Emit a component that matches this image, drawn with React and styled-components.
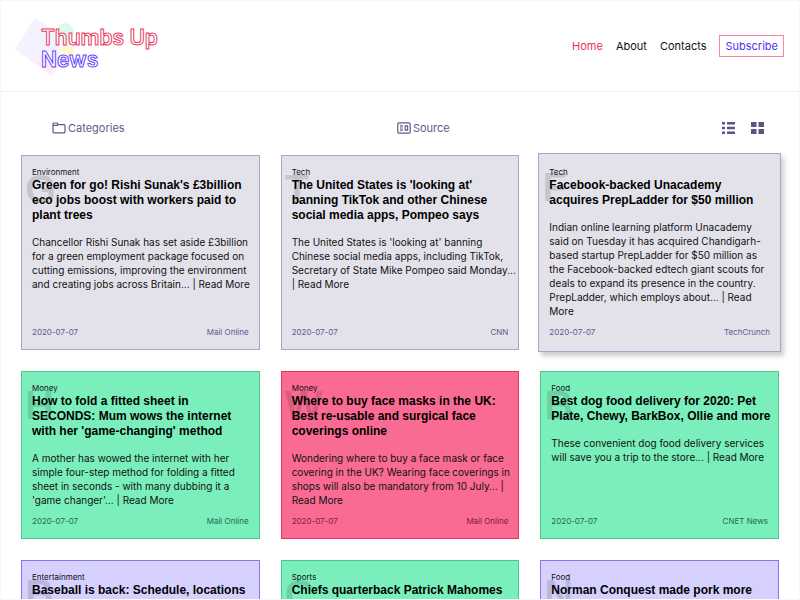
import React from "react";
import styled, { createGlobalStyle } from "styled-components";

const Global = createGlobalStyle`
  * { box-sizing: border-box; }
  body { margin: 0; background: #fff; color: #111; font-family: Inter, "Open Sans", sans-serif; overflow: hidden; }
`;

const Page = styled.div`
  height: 100vh;
  overflow: hidden;
  border: 1px solid #f8f8f8;
`;

const Header = styled.header`
  display: flex;
  justify-content: space-between;
  align-items: center;
  height: 91px;
  padding: 0 15px 0 14px;
  border-bottom: 1px solid #f3f3f3;
`;

const Brand = styled.a`
  display: grid;
  text-decoration: none;
  & > * { grid-area: 1 / 1; }
`;

const Shapes = styled.svg`
  width: 64px;
  height: 62px;
`;

const BrandName = styled.span`
  padding: 12px 0 0 26px;
  font: 600 21px/22px Inter, sans-serif;
  color: #fff;
  -webkit-text-stroke: 1px #e8405f;
`;

const BrandSecond = styled.span`
  display: block;
  -webkit-text-stroke-color: #6647ff;
`;

const Nav = styled.nav`
  display: flex;
  align-items: center;
  gap: 13px;
`;

const NavLink = styled.a`
  font-size: 11px;
  line-height: 20px;
  color: ${(p) => (p.$active ? "#e8304f" : "#111")};
  text-decoration: none;
`;

const Subscribe = styled.button`
  height: 22px;
  padding: 0 5px;
  border: 1px solid #fb86a4;
  background: #fff;
  color: #5030f0;
  font: 11px/20px Inter, sans-serif;
`;

const Toolbar = styled.div`
  display: flex;
  justify-content: space-between;
  align-items: center;
  padding: 26px 35px 17px 51px;
`;

const Filter = styled.button`
  display: flex;
  align-items: center;
  gap: 2px;
  padding: 0;
  border: 0;
  background: none;
  color: #5f5a8c;
  font: 11px/20px Inter, sans-serif;
`;

const Views = styled.div`
  display: flex;
  gap: 16px;
`;

const ViewButton = styled.button`
  display: flex;
  padding: 0;
  border: 0;
  background: none;
  color: #5a548c;
`;

const Grid = styled.main`
  display: grid;
  grid-template-columns: repeat(3, minmax(0, 1fr));
  gap: 21px;
  padding: 0 20px;
`;

const tones = {
  grey: ["#e3e2eb", "#a9a3cd", "#5f5a8c"],
  green: ["#7aefbb", "#48c98f", "#27694c"],
  pink: ["#f96b92", "#e8305f", "#7d1c38"],
  violet: ["#d5d0fd", "#8674ee", "#5f5a8c"],
};

const Card = styled.article`
  position: relative;
  display: flex;
  flex-direction: column;
  padding: ${(p) => (p.$raised ? "13px 10px 14px" : "11px 10px 12px")};
  margin: ${(p) => (p.$raised ? "-2px" : "0")};
  background: ${(p) => tones[p.$tone][0]};
  border: 1px solid ${(p) => tones[p.$tone][1]};
  box-shadow: ${(p) => (p.$raised ? "3px 4px 5px rgba(0, 0, 0, 0.2)" : "none")};
`;

const Initial = styled.span`
  position: absolute;
  top: 13px;
  left: 3px;
  font: 700 40px/40px "Liberation Sans", sans-serif;
  color: rgba(0, 0, 0, 0.12);
`;

const Category = styled.span`
  position: relative;
  font-size: 8px;
  line-height: 10px;
`;

const Title = styled.h2`
  position: relative;
  margin: 1px -4px 12px 0;
  font: 700 12px/15px "Liberation Sans", Arial, sans-serif;
  color: #000;
`;

const Summary = styled.p`
  position: relative;
  margin: 0 ${(p) => (p.$raised ? "0" : "-9px")} 9px 0;
  font-size: 10px;
  line-height: 14px;
`;

const ReadMore = styled.a`
  color: inherit;
  text-decoration: none;
`;

const Meta = styled.footer`
  display: flex;
  justify-content: space-between;
  margin-top: auto;
  font-size: 8px;
  line-height: 10px;
  color: ${(p) => tones[p.$tone][2]};
`;

const articles = [
  { tone: "grey", category: "Environment", source: "Mail Online", title: "Green for go! Rishi Sunak's £3billion eco jobs boost with workers paid to plant trees", text: "Chancellor Rishi Sunak has set aside £3billion for a green employment package focused on cutting emissions, improving the environment and creating jobs across Britain..." },
  { tone: "grey", category: "Tech", source: "CNN", title: "The United States is 'looking at' banning TikTok and other Chinese social media apps, Pompeo says", text: "The United States is 'looking at' banning Chinese social media apps, including TikTok, Secretary of State Mike Pompeo said Monday..." },
  { tone: "grey", raised: true, category: "Tech", source: "TechCrunch", title: "Facebook-backed Unacademy acquires PrepLadder for $50 million", text: "Indian online learning platform Unacademy said on Tuesday it has acquired Chandigarh-based startup PrepLadder for $50 million as the Facebook-backed edtech giant scouts for deals to expand its presence in the country. PrepLadder, which employs about..." },
  { tone: "green", category: "Money", source: "Mail Online", title: "How to fold a fitted sheet in SECONDS: Mum wows the internet with her 'game-changing' method", text: "A mother has wowed the internet with her simple four-step method for folding a fitted sheet in seconds - with many dubbing it a 'game changer'..." },
  { tone: "pink", category: "Money", source: "Mail Online", title: "Where to buy face masks in the UK: Best re-usable and surgical face coverings online", text: "Wondering where to buy a face mask or face covering in the UK? Wearing face coverings in shops will also be mandatory from 10 July..." },
  { tone: "green", category: "Food", source: "CNET News", title: "Best dog food delivery for 2020: Pet Plate, Chewy, BarkBox, Ollie and more", text: "These convenient dog food delivery services will save you a trip to the store..." },
  { tone: "violet", category: "Entertainment", title: "Baseball is back: Schedule, locations" },
  { tone: "green", category: "Sports", title: "Chiefs quarterback Patrick Mahomes" },
  { tone: "violet", category: "Food", title: "Norman Conquest made pork more" },
];

function Article({ item }) {
  return (
    <Card $tone={item.tone} $raised={item.raised}>
      <Initial aria-hidden="true">{item.title[0]}</Initial>
      <Category>{item.category}</Category>
      <Title>{item.title}</Title>
      {item.text && (
        <Summary $raised={item.raised}>
          {item.text} | <ReadMore href="#">Read More</ReadMore>
        </Summary>
      )}
      {item.source && (
        <Meta $tone={item.tone}>
          <time>2020-07-07</time>
          <span>{item.source}</span>
        </Meta>
      )}
    </Card>
  );
}

export default function App() {
  return (
    <>
      <Global />
      <Page>
        <Header>
          <Brand href="#">
            <Shapes viewBox="0 0 64 62" aria-hidden="true">
              <path d="M20 3 61 30 36 61 0 34Z" fill="#f5f2ff" />
              <circle cx="50" cy="17" r="9" fill="#dcfbed" />
              <circle cx="52" cy="37" r="7" fill="#fff9d2" />
              <path d="M18 46h20l-3 13Z" fill="#ffe9ed" />
            </Shapes>
            <BrandName>
              Thumbs Up
              <BrandSecond>News</BrandSecond>
            </BrandName>
          </Brand>
          <Nav>
            <NavLink href="#" $active>Home</NavLink>
            <NavLink href="#">About</NavLink>
            <NavLink href="#">Contacts</NavLink>
            <Subscribe>Subscribe</Subscribe>
          </Nav>
        </Header>
        <Toolbar>
          <Filter>
            <svg width="14" height="12" viewBox="0 0 14 12" fill="none" stroke="currentColor" strokeWidth="1.2" aria-hidden="true">
              <path d="M1 9.8V2Q1 1 2 1h3l1.3 1.6H12q1 0 1 1v6.2q0 1-1 1H2q-1 0-1-1ZM1 3.4h5" />
            </svg>
            Categories
          </Filter>
          <Filter>
            <svg width="14" height="12" viewBox="0 0 14 12" fill="none" stroke="currentColor" strokeWidth="1.2" aria-hidden="true">
              <rect x="0.8" y="0.8" width="12.4" height="10.4" rx="1.3" />
              <path d="M3 3.8h3M3 6h3M3 8.2h3M8.2 3.8h2.4v4.4H8.2Z" />
            </svg>
            Source
          </Filter>
          <Views>
            <ViewButton aria-label="List view">
              <svg width="13" height="12" viewBox="0 0 13 12" fill="currentColor" aria-hidden="true">
                <path d="M0 0h3v2.6H0ZM5 0h8v2.6H5ZM0 4.7h3v2.6H0ZM5 4.7h8v2.6H5ZM0 9.4h3V12H0ZM5 9.4h8V12H5Z" />
              </svg>
            </ViewButton>
            <ViewButton aria-label="Grid view">
              <svg width="13" height="12" viewBox="0 0 13 12" fill="currentColor" aria-hidden="true">
                <path d="M0 0h5.5v5H0ZM7.5 0H13v5H7.5ZM0 7h5.5v5H0ZM7.5 7H13v5H7.5Z" />
              </svg>
            </ViewButton>
          </Views>
        </Toolbar>
        <Grid>
          {articles.map((item) => (
            <Article key={item.title} item={item} />
          ))}
        </Grid>
      </Page>
    </>
  );
}
